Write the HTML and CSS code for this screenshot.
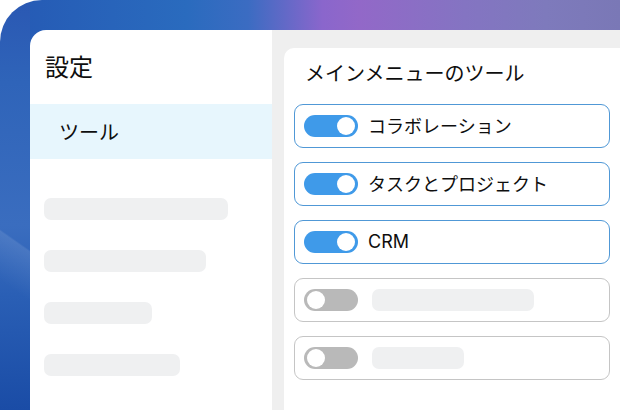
FILE: index.html
```html
<!DOCTYPE html>
<html lang="ja">
<head>
<meta charset="utf-8">
<link rel="stylesheet" href="styles.css">
</head>
<body>
<div class="frame">
  <div class="window">
    <aside class="sidebar">
      <h1 class="side-title">設定</h1>
      <div class="nav-item">ツール</div>
      <div class="side-skeletons">
        <div class="skel skel-a"></div>
        <div class="skel skel-b"></div>
        <div class="skel skel-c"></div>
        <div class="skel skel-d"></div>
      </div>
    </aside>
    <main class="main">
      <section class="card">
        <h2 class="card-title">メインメニューのツール</h2>
        <div class="rows">
          <div class="row on"><span class="toggle"><span class="knob"></span></span><span class="label">コラボレーション</span></div>
          <div class="row on"><span class="toggle"><span class="knob"></span></span><span class="label">タスクとプロジェクト</span></div>
          <div class="row on"><span class="toggle"><span class="knob"></span></span><span class="label latin">CRM</span></div>
          <div class="row off"><span class="toggle"><span class="knob"></span></span><span class="row-skel row-skel-long"></span></div>
          <div class="row off"><span class="toggle"><span class="knob"></span></span><span class="row-skel row-skel-short"></span></div>
        </div>
      </section>
    </main>
  </div>
</div>
</body>
</html>
```

FILE: styles.css
```css
* { box-sizing: border-box; }
html, body {
  margin: 0;
  padding: 0;
  width: 620px;
  height: 410px;
  overflow: hidden;
  background: #ffffff;
  font-family: "Noto Sans CJK JP", "Noto Sans", sans-serif;
  color: #0e0e0e;
}
.frame {
  width: 620px;
  height: 410px;
  border-top-left-radius: 42px;
  padding: 30px 0 0 30px;
  background:
    linear-gradient(215deg, rgba(255,255,255,0) 0%, rgba(255,255,255,0) 58%, rgba(255,255,255,0.10) 58.5%, rgba(255,255,255,0) 70%) left top / 30px 100% no-repeat,
    linear-gradient(180deg, #2a58b3 0%, #2f64b9 20%, #3a6dbf 55%, #2a5fb5 72%, #1a4ca6 100%) left top / 30px 100% no-repeat,
    linear-gradient(90deg, #2559b4 0%, #2a6bbe 30%, #3b6cc2 40%, #8a66cc 52%, #9268c8 58%, #8474c2 75%, #7e7abc 88%, #7a78b6 100%);
}
.window {
  display: flex;
  height: 380px;
  background: #ffffff;
  border-top-left-radius: 16px;
  overflow: hidden;
}
.sidebar {
  width: 242px;
  flex: none;
  padding-top: 21px;
}
.side-title {
  margin: 0 0 23px 15px;
  font-size: 24px;
  line-height: 30px;
  font-weight: 400;
}
.nav-item {
  height: 55px;
  background: #e7f6fd;
  padding-left: 29px;
  padding-bottom: 1px;
  display: flex;
  align-items: center;
  font-size: 20px;
  font-weight: 400;
}
.side-skeletons {
  display: flex;
  flex-direction: column;
  gap: 30px;
  padding: 39px 0 0 14px;
}
.skel {
  height: 22px;
  border-radius: 7px;
  background: #eff0f1;
}
.skel-a { width: 184px; }
.skel-b { width: 162px; }
.skel-c { width: 108px; }
.skel-d { width: 136px; }
.main {
  flex: 1;
  background: #efefef;
  padding: 18px 0 0 12px;
  display: flex;
}
.card {
  flex: 1;
  background: #ffffff;
  border-top-left-radius: 10px;
  padding: 13px 10px 0 10px;
}
.card-title {
  margin: 0 0 19px 11px;
  font-size: 20px;
  line-height: 24px;
  font-weight: 400;
}
.rows {
  display: flex;
  flex-direction: column;
  gap: 14px;
}
.row {
  height: 44px;
  border-radius: 9px;
  border: 1px solid #c5c5c5;
  display: flex;
  align-items: center;
  padding-left: 9px;
}
.row.on { border-color: #5098d6; }
.toggle {
  width: 54px;
  height: 22px;
  border-radius: 11px;
  background: #b9b9b9;
  position: relative;
  flex: none;
}
.row.on .toggle { background: #3f9ae9; }
.knob {
  position: absolute;
  top: 2px;
  left: 3px;
  width: 18px;
  height: 18px;
  border-radius: 50%;
  background: #ffffff;
}
.row.on .knob { left: auto; right: 3px; }
.label {
  margin-left: 10px;
  margin-bottom: 3px;
  font-size: 18px;
  line-height: 24px;
  font-weight: 400;
}
.label.latin {
  font-family: "Inter", "Noto Sans", sans-serif;
  font-weight: 400;
  margin-bottom: 1px;
}
.row-skel {
  margin-left: 14px;
  height: 22px;
  border-radius: 7px;
  background: #eff0f1;
}
.row-skel-long { width: 162px; }
.row-skel-short { width: 92px; }
```
